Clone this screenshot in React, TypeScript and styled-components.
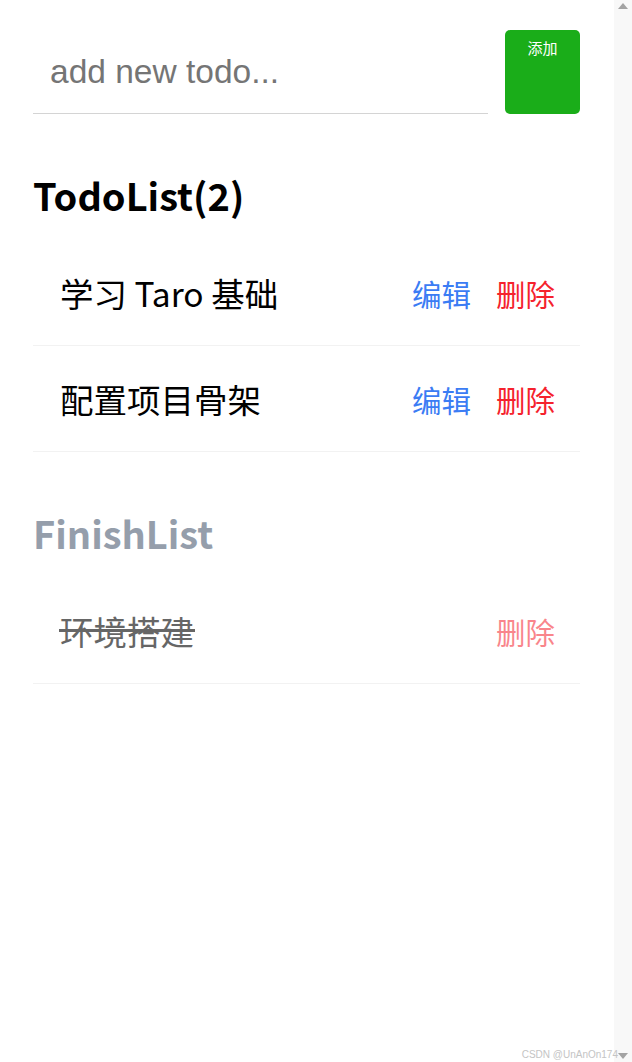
import styled, { createGlobalStyle } from "styled-components";

const GlobalStyle = createGlobalStyle`
  html, body {
    margin: 0;
    padding: 0;
    background: #ffffff;
  }
  body {
    font-family: "Noto Sans CJK SC", "Noto Sans", sans-serif;
  }
`;

const Screen = styled.div`
  display: flex;
  width: 632px;
  height: 1062px;
  position: relative;
  overflow: hidden;
`;

const Page = styled.div`
  flex: 1;
  padding: 30px 34px 0 33px;
  box-sizing: border-box;
`;

const ScrollTrack = styled.div`
  width: 18px;
  background: #f8f8f8;
  display: flex;
  flex-direction: column;
  justify-content: space-between;
  align-items: center;
  padding: 3px 0;
  box-sizing: border-box;
`;

const Arrow = styled.div<{ $down?: boolean }>`
  width: 0;
  height: 0;
  border-left: 5px solid transparent;
  border-right: 5px solid transparent;
  ${(p) =>
    p.$down
      ? "border-top: 6px solid #a3a3a3;"
      : "border-bottom: 6px solid #a3a3a3;"}
`;

const AddBar = styled.div`
  display: flex;
  align-items: stretch;
  gap: 17px;
  height: 84px;
`;

const TodoInput = styled.input`
  flex: 1;
  min-width: 0;
  border: none;
  border-bottom: 1px solid #d4d4d4;
  outline: none;
  padding: 0 0 0 17px;
  font-family: "Liberation Sans", Arial, sans-serif;
  font-size: 33.5px;
  color: #333;
  background: transparent;
  &::placeholder {
    color: #757575;
  }
`;

const AddButton = styled.button`
  width: 75px;
  border: none;
  border-radius: 5px;
  background: #1aad19;
  color: #ffffff;
  font-family: "Noto Sans CJK SC", sans-serif;
  font-size: 15px;
  line-height: 20px;
  padding: 8px 0 0;
  display: flex;
  justify-content: center;
  align-items: flex-start;
`;

const SectionTitle = styled.h2<{ $muted?: boolean }>`
  margin: 57px 0 21px;
  font-size: 38px;
  line-height: 48px;
  font-weight: 700;
  color: ${(p) => (p.$muted ? "#959eab" : "#000000")};
`;

const List = styled.div`
  display: flex;
  flex-direction: column;
`;

const Row = styled.div`
  display: flex;
  align-items: center;
  height: 105px;
  padding: 0 25px 0 27px;
  border-bottom: 1px solid #f2f2f2;
`;

const ItemText = styled.div<{ $done?: boolean }>`
  flex: 1;
  font-size: 33.5px;
  line-height: 44px;
  color: ${(p) => (p.$done ? "#666666" : "#000000")};
`;

const Struck = styled.span`
  position: relative;
  display: inline-block;
`;

/* the strike line lies over the finished item's text */
const StrikeLine = styled.span`
  position: absolute;
  left: -1px;
  right: -1px;
  top: 20px;
  height: 3px;
  background-color: #666666;
`;

const Actions = styled.div`
  display: flex;
  gap: 25px;
`;

const Action = styled.span<{ $tone: "edit" | "delete"; $faded?: boolean }>`
  font-size: 29.5px;
  line-height: 40px;
  color: ${(p) => (p.$tone === "edit" ? "#3b7cf4" : "#f5222d")};
  opacity: ${(p) => (p.$faded ? 0.55 : 1)};
`;

const Watermark = styled.span`
  position: absolute;
  right: 14px;
  bottom: 2px;
  font-family: "Liberation Sans", Arial, sans-serif;
  font-size: 10px;
  color: #c4c4c4;
`;

const todos = ["学习 Taro 基础", "配置项目骨架"];
const finished = ["环境搭建"];

export default function App() {
  return (
    <>
      <GlobalStyle />
      <Screen>
        <Page>
          <AddBar>
            <TodoInput placeholder="add new todo..." />
            <AddButton>添加</AddButton>
          </AddBar>

          <SectionTitle>TodoList({todos.length})</SectionTitle>
          <List>
            {todos.map((t) => (
              <Row key={t}>
                <ItemText>{t}</ItemText>
                <Actions>
                  <Action $tone="edit">编辑</Action>
                  <Action $tone="delete">删除</Action>
                </Actions>
              </Row>
            ))}
          </List>

          <SectionTitle $muted>FinishList</SectionTitle>
          <List>
            {finished.map((t) => (
              <Row key={t}>
                <ItemText $done>
                  <Struck>
                    {t}
                    <StrikeLine />
                  </Struck>
                </ItemText>
                <Actions>
                  <Action $tone="delete" $faded>
                    删除
                  </Action>
                </Actions>
              </Row>
            ))}
          </List>
        </Page>
        <ScrollTrack>
          <Arrow />
          <Arrow $down />
        </ScrollTrack>
        <Watermark>CSDN @UnAnOn174</Watermark>
      </Screen>
    </>
  );
}
